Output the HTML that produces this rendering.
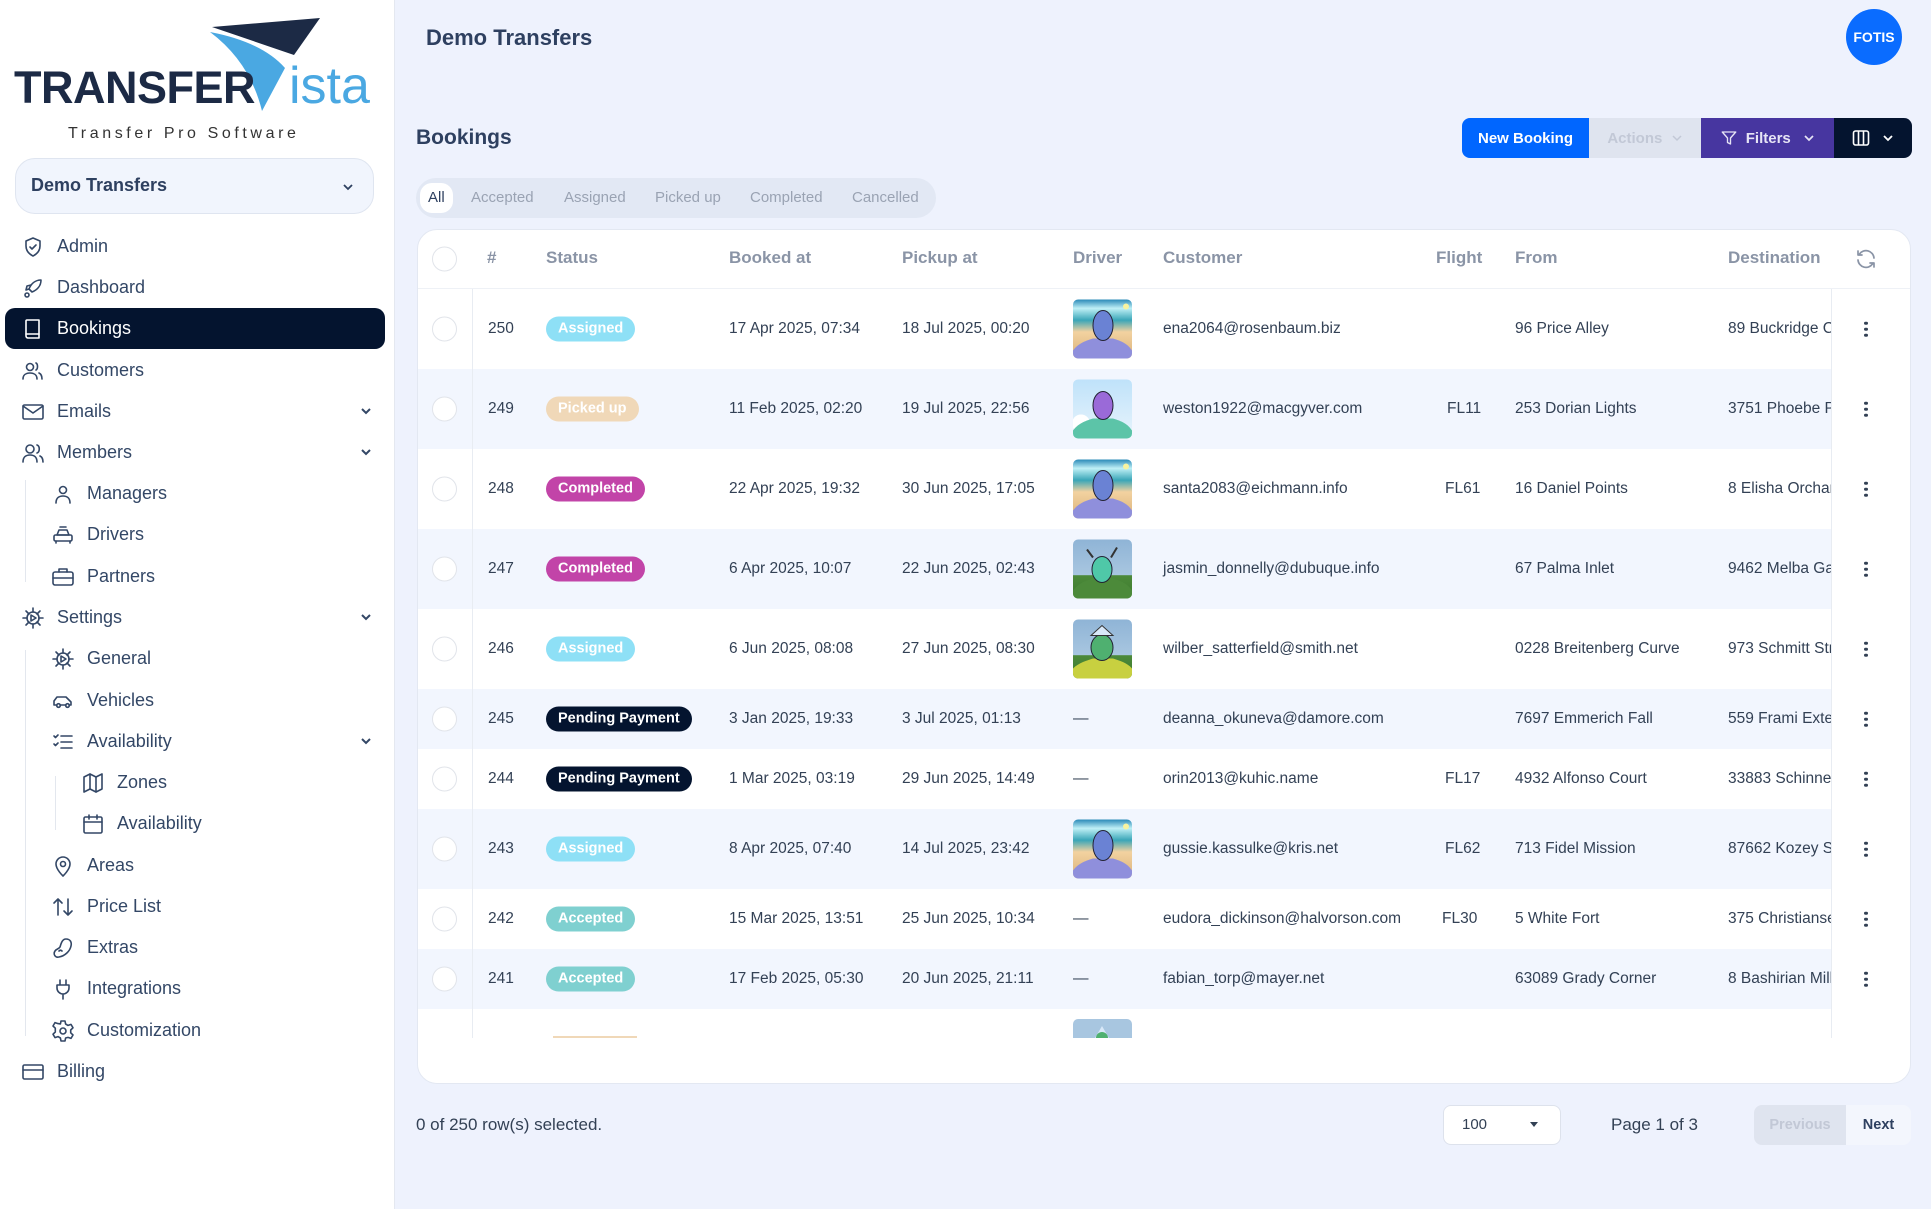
<!DOCTYPE html>
<html><head><meta charset="utf-8">
<style>
*{box-sizing:border-box;margin:0;padding:0}
body{width:1931px;height:1209px;overflow:hidden;background:#eef2fd;font-family:"Liberation Sans",sans-serif;color:#334766;position:relative}
.sb{position:absolute;left:0;top:0;width:395px;height:1209px;background:#fff;border-right:1px solid #e4e8f0}
.abs{position:absolute}
.mi{position:absolute;left:0;height:41px;display:flex;align-items:center;font-size:18px;color:#334766;white-space:nowrap}
.mi svg{width:24px;height:24px;fill:none;stroke:#334766;stroke-width:1.6;stroke-linecap:round;stroke-linejoin:round;margin-right:12px}
.chev{position:absolute;left:358px;width:16px;height:16px}
.vl{position:absolute;width:1px;background:#e3e7ee}
.btn{position:absolute;top:118px;height:40px;display:flex;align-items:center;justify-content:center;font-weight:bold;font-size:15px}
.card{position:absolute;left:417px;top:229px;width:1494px;height:855px;background:#fff;border-radius:20px;border:1px solid #e3e8f2;overflow:hidden}
.th{position:absolute;top:248px;font-weight:bold;font-size:17px;color:#8a94a6}
.row{position:absolute;left:418px;width:1413px}
.row.alt{background:#f2f6fe}
.cell{position:absolute;font-size:15.5px;color:#334155;white-space:nowrap;transform:translateY(-50%)}
.cb{position:absolute;left:432px;width:25px;height:25px;border:1.5px solid #e1e4ea;border-radius:50%;background:#fff;transform:translateY(-50%)}
.bd{position:absolute;left:546px;height:25px;line-height:25px;border-radius:13px;padding:0 12px;color:#fff;font-weight:bold;font-size:14.5px;transform:translateY(-50%);white-space:nowrap}
.av{position:absolute;left:1073px;width:59px;height:59px;border-radius:5px;overflow:hidden;transform:translateY(-50%)}
.dots{position:absolute;left:1864px;width:4px;transform:translateY(-50%)}
.dots i{display:block;width:3.5px;height:3.5px;border-radius:50%;background:#334155;margin:2.5px 0}
</style></head><body>

<div class="sb">
  <svg class="abs" style="left:0;top:0" width="395" height="150" viewBox="0 0 395 150">
    <polygon points="212,27 320,18 294,55" fill="#1c2a45"/>
    <path d="M210,32 Q262,42 285,68 L262,111 Q250,62 210,32Z" fill="#4aa8e2"/>
    <text x="14" y="103" font-family="Liberation Sans" font-weight="bold" font-size="45" fill="#1c2a45" letter-spacing="-0.5">TRANSFER</text>
    <text x="289" y="103" font-family="Liberation Sans" font-size="52" fill="#4aa8e2">ista</text>
    <text x="68" y="138" font-family="Liberation Sans" font-size="16" fill="#333" letter-spacing="3.6">Transfer Pro Software</text>
  </svg>
  <div class="abs" style="left:15px;top:158px;width:359px;height:56px;border-radius:20px;background:#f1f5fd;border:1px solid #dfe5f0"></div>
  <div class="abs" style="left:31px;top:175px;font-size:18px;font-weight:bold;color:#2e4060">Demo Transfers</div>
  <svg class="abs" style="left:341px;top:180px" width="14" height="14" viewBox="0 0 14 14"><path d="M3 5l4 4 4-4" fill="none" stroke="#2e4060" stroke-width="1.8"/></svg>

  <div class="abs" style="left:5px;top:308px;width:380px;height:41px;border-radius:10px;background:#04142f"></div>

  <div class="vl" style="left:25px;top:480px;height:102px"></div>
  <div class="vl" style="left:25px;top:650px;height:386px"></div>
  <div class="vl" style="left:55px;top:776px;height:54px"></div>

  <div class="mi" style="top:226px;left:21px"><svg viewBox="0 0 24 24"><path d="M12 3l7 3v5c0 5-3 8-7 10-4-2-7-5-7-10V6z"/><path d="M9 12l2 2 4-4"/></svg>Admin</div>
  <div class="mi" style="top:267px;left:21px"><svg viewBox="0 0 24 24"><path d="M20 4c-6 0-10 4-12 9l3 3c5-2 9-6 9-12z"/><path d="M8 13l-3 1 1-4 4-1"/><circle cx="6" cy="19" r="2"/></svg>Dashboard</div>
  <div class="mi" style="top:308px;left:21px;color:#fff"><svg viewBox="0 0 24 24" style="stroke:#fff"><path d="M6 3h12v18H7a2 2 0 0 1-2-2V4a1 1 0 0 1 1-1z"/><path d="M5 17h13"/></svg>Bookings</div>
  <div class="mi" style="top:350px;left:21px"><svg viewBox="0 0 24 24"><circle cx="9" cy="8" r="3.5"/><path d="M2 20c0-4 3-6 7-6s7 2 7 6"/><path d="M15 4c2 1 2 6 0 7M18 14c2 1 3 3 3 6"/></svg>Customers</div>
  <div class="mi" style="top:391px;left:21px"><svg viewBox="0 0 24 24"><rect x="2" y="5" width="20" height="14" rx="1.5"/><path d="M2 6l10 7 10-7"/></svg>Emails</div>
  <div class="mi" style="top:432px;left:21px"><svg viewBox="0 0 24 24"><circle cx="9" cy="8" r="4"/><path d="M2 21c0-5 3-7 7-7s7 2 7 7"/><path d="M16 4c3 1 3 7 0 8M19 15c2 1 3 3 3 6"/></svg>Members</div>
  <div class="mi" style="top:473px;left:51px"><svg viewBox="0 0 24 24"><circle cx="12" cy="8" r="3.5"/><path d="M5 21c0-5 3-7 7-7s7 2 7 7"/></svg>Managers</div>
  <div class="mi" style="top:514px;left:51px"><svg viewBox="0 0 24 24"><path d="M9 4h6M8 7h8l2 5H6z"/><rect x="3" y="12" width="18" height="6" rx="1.5"/><path d="M5 18v2M19 18v2"/></svg>Drivers</div>
  <div class="mi" style="top:556px;left:51px"><svg viewBox="0 0 24 24"><rect x="2" y="7" width="20" height="13" rx="2"/><path d="M8 7V4h8v3M2 13h20"/></svg>Partners</div>
  <div class="mi" style="top:597px;left:21px"><svg viewBox="0 0 24 24"><circle cx="12" cy="12" r="6"/><path d="M12 2v4M12 18v4M2 12h4M18 12h4M5 5l3 3M16 16l3 3M5 19l3-3M16 8l3-3"/><path d="M10 9l5 3-5 3z"/></svg>Settings</div>
  <div class="mi" style="top:638px;left:51px"><svg viewBox="0 0 24 24"><circle cx="12" cy="12" r="6"/><path d="M12 2v4M12 18v4M2 12h4M18 12h4M5 5l3 3M16 16l3 3M5 19l3-3M16 8l3-3"/><path d="M10 9l5 3-5 3z"/></svg>General</div>
  <div class="mi" style="top:680px;left:51px"><svg viewBox="0 0 24 24"><path d="M3 16v-4l3-4h9l5 5v3h-2M6 16H4M9 16h6"/><circle cx="7.5" cy="16.5" r="1.8"/><circle cx="16.5" cy="16.5" r="1.8"/></svg>Vehicles</div>
  <div class="mi" style="top:721px;left:51px"><svg viewBox="0 0 24 24"><path d="M3 6l1.5 1.5L7 5M3 14l1.5 1.5L7 13M10 6h11M10 12h11M10 18h11"/></svg>Availability</div>
  <div class="mi" style="top:762px;left:81px"><svg viewBox="0 0 24 24"><path d="M3 6l6-3 6 3 6-3v15l-6 3-6-3-6 3z"/><path d="M9 3v15M15 6v15"/></svg>Zones</div>
  <div class="mi" style="top:803px;left:81px"><svg viewBox="0 0 24 24"><rect x="3" y="5" width="18" height="16" rx="1.5"/><path d="M3 10h18M8 3v4M16 3v4"/></svg>Availability</div>
  <div class="mi" style="top:845px;left:51px"><svg viewBox="0 0 24 24"><path d="M12 22s7-6.5 7-12a7 7 0 0 0-14 0c0 5.5 7 12 7 12z"/><circle cx="12" cy="10" r="2.5"/></svg>Areas</div>
  <div class="mi" style="top:886px;left:51px"><svg viewBox="0 0 24 24"><path d="M7 20V4M3 8l4-4 4 4M17 4v16M13 16l4 4 4-4"/></svg>Price List</div>
  <div class="mi" style="top:927px;left:51px"><svg viewBox="0 0 24 24"><path d="M15 3c4 0 6 3 5 7-1 5-6 10-12 11-4 1-6-3-4-6 1-2 4-2 5-4 1-3 2-8 6-8z"/><path d="M8 15c1-1 2-1 3 0"/></svg>Extras</div>
  <div class="mi" style="top:968px;left:51px"><svg viewBox="0 0 24 24"><path d="M9 3v5M15 3v5M6 8h12v3a6 6 0 0 1-12 0zM12 17v5"/></svg>Integrations</div>
  <div class="mi" style="top:1010px;left:51px"><svg viewBox="0 0 24 24"><path d="M10 2h4l.6 3 2.4 1.4 3-1 2 3.4-2.3 2.2v2.8l2.3 2.2-2 3.4-3-1L14.6 19 14 22h-4l-.6-3-2.4-1.4-3 1-2-3.4 2.3-2.2V9.2L2 7l2-3.4 3 1L9.4 5z"/><circle cx="12" cy="12" r="3"/></svg>Customization</div>
  <div class="mi" style="top:1051px;left:21px"><svg viewBox="0 0 24 24"><rect x="2" y="5" width="20" height="14" rx="1.5"/><path d="M2 10h20"/></svg>Billing</div>

  <svg class="chev" style="top:403px" viewBox="0 0 16 16"><path d="M4 6l4 4 4-4" fill="none" stroke="#334766" stroke-width="2"/></svg>
  <svg class="chev" style="top:444px" viewBox="0 0 16 16"><path d="M4 6l4 4 4-4" fill="none" stroke="#334766" stroke-width="2"/></svg>
  <svg class="chev" style="top:609px" viewBox="0 0 16 16"><path d="M4 6l4 4 4-4" fill="none" stroke="#334766" stroke-width="2"/></svg>
  <svg class="chev" style="top:733px" viewBox="0 0 16 16"><path d="M4 6l4 4 4-4" fill="none" stroke="#334766" stroke-width="2"/></svg>
</div>

<div class="abs" style="left:426px;top:25px;font-size:22px;font-weight:bold;color:#2e4060">Demo Transfers</div>
<div class="abs" style="left:1846px;top:9px;width:56px;height:56px;border-radius:50%;background:#0a6cff;color:#fff;font-weight:bold;font-size:14px;display:flex;align-items:center;justify-content:center">FOTIS</div>
<div class="abs" style="left:416px;top:126px;font-size:21px;font-weight:bold;color:#2e4060">Bookings</div>

<div class="btn" style="left:1462px;width:127px;background:#0066ff;color:#fff;border-radius:8px 0 0 8px">New Booking</div>
<div class="btn" style="left:1589px;width:112px;background:#dfe4ef;color:#c2c8d6">Actions&nbsp;&nbsp;<svg width="12" height="12" viewBox="0 0 12 12"><path d="M2 4l4 4 4-4" fill="none" stroke="#c2c8d6" stroke-width="1.5"/></svg></div>
<div class="btn" style="left:1701px;width:133px;background:#4736a0;color:#e6e4f5"><svg width="18" height="18" viewBox="0 0 24 24" style="margin-right:8px"><path d="M3 4h18l-7 8v8l-4-2v-6z" fill="none" stroke="#e6e4f5" stroke-width="1.8" stroke-linejoin="round"/></svg>Filters&nbsp;&nbsp;&nbsp;<svg width="12" height="12" viewBox="0 0 12 12"><path d="M2 4l4 4 4-4" fill="none" stroke="#e6e4f5" stroke-width="1.7"/></svg></div>
<div class="btn" style="left:1834px;width:78px;background:#04142f;border-radius:0 8px 8px 0"><svg width="18" height="18" viewBox="0 0 18 18" style="margin-right:12px"><rect x="1.5" y="2" width="15" height="14" rx="2" fill="none" stroke="#fff" stroke-width="1.6"/><path d="M6.5 2v14M11.5 2v14" stroke="#fff" stroke-width="1.6"/></svg><svg width="12" height="12" viewBox="0 0 12 12"><path d="M2 4l4 4 4-4" fill="none" stroke="#fff" stroke-width="1.8"/></svg></div>

<div class="abs" style="left:416px;top:178px;width:520px;height:40px;border-radius:20px;background:#e2e8f4"></div>
<div class="abs" style="left:420px;top:183px;width:33px;height:30px;border-radius:12px;background:#fff"></div>
<div class="abs" style="top:189px;left:428px;font-size:15px;color:#2e4060">All</div>
<div class="abs" style="top:189px;left:471px;font-size:15px;color:#9aa3b3">Accepted</div>
<div class="abs" style="top:189px;left:564px;font-size:15px;color:#9aa3b3">Assigned</div>
<div class="abs" style="top:189px;left:655px;font-size:15px;color:#9aa3b3">Picked up</div>
<div class="abs" style="top:189px;left:750px;font-size:15px;color:#9aa3b3">Completed</div>
<div class="abs" style="top:189px;left:852px;font-size:15px;color:#9aa3b3">Cancelled</div>

<div class="card"></div>
<div class="cb" style="top:259px"></div>
<div class="th" style="left:487px">#</div>
<div class="th" style="left:546px">Status</div>
<div class="th" style="left:729px">Booked at</div>
<div class="th" style="left:902px">Pickup at</div>
<div class="th" style="left:1073px">Driver</div>
<div class="th" style="left:1163px">Customer</div>
<div class="th" style="left:1436px">Flight</div>
<div class="th" style="left:1515px">From</div>
<div class="th" style="left:1728px">Destination</div>
<svg class="abs" style="left:1854px;top:247px" width="24" height="24" viewBox="0 0 24 24"><path d="M20 11a8 8 0 0 0-14.5-4M4 4v4h4M4 13a8 8 0 0 0 14.5 4M20 20v-4h-4" fill="none" stroke="#8a94a6" stroke-width="1.7" stroke-linecap="round" stroke-linejoin="round"/></svg>
<div class="abs" style="left:418px;top:288px;width:1492px;height:1px;background:#eef1f6"></div>

<div class="row" style="top:289px;height:80px"></div>
<div class="row alt" style="top:369px;height:80px"></div>
<div class="row" style="top:449px;height:80px"></div>
<div class="row alt" style="top:529px;height:80px"></div>
<div class="row" style="top:609px;height:80px"></div>
<div class="row alt" style="top:689px;height:60px"></div>
<div class="row" style="top:749px;height:60px"></div>
<div class="row alt" style="top:809px;height:80px"></div>
<div class="row" style="top:889px;height:60px"></div>
<div class="row alt" style="top:949px;height:60px"></div>
<div class="abs" style="left:472px;top:289px;width:1px;height:749px;background:#e8ecf2"></div>
<div class="abs" style="left:1831px;top:289px;width:1px;height:749px;background:#e8ecf2"></div>

<svg width="0" height="0" style="position:absolute"><defs>
<linearGradient id="sky" x1="0" y1="0" x2="0" y2="1"><stop offset="0" stop-color="#2a8ab8"/><stop offset=".15" stop-color="#bff0f6"/><stop offset=".35" stop-color="#3aa6b8"/><stop offset=".55" stop-color="#f3d2a0"/><stop offset="1" stop-color="#d9b27a"/></linearGradient>
<linearGradient id="sky2" x1="0" y1="0" x2="0" y2="1"><stop offset="0" stop-color="#bfe2fa"/><stop offset="1" stop-color="#e8f4fc"/></linearGradient>
<linearGradient id="sky3" x1="0" y1="0" x2="0" y2="1"><stop offset="0" stop-color="#8fb4d6"/><stop offset=".6" stop-color="#a8c6e0"/><stop offset=".61" stop-color="#4c8a3a"/><stop offset="1" stop-color="#3d7a2e"/></linearGradient>
</defs></svg>

<div class="cb" style="top:329px"></div><div class="cell" style="left:488px;top:329px">250</div><div class="bd" style="top:329px;background:#8ee0f6">Assigned</div><div class="cell" style="left:729px;top:329px">17 Apr 2025, 07:34</div><div class="cell" style="left:902px;top:329px">18 Jul 2025, 00:20</div>
<div class="av" style="top:329px"><svg width="59" height="59" viewBox="0 0 59 59"><rect width="59" height="59" fill="url(#sky)"/><circle cx="53" cy="7" r="3" fill="#f8f3a0"/><path d="M0 59v-8c6-8 14-10 20-12h20c6 2 14 4 19 12v8z" fill="#8f8fdc"/><ellipse cx="30" cy="26" rx="10" ry="15" fill="#6a82d4" stroke="#223" stroke-width="1"/></svg></div>
<div class="cell" style="left:1163px;top:329px">ena2064@rosenbaum.biz</div><div class="cell" style="left:1515px;top:329px">96 Price Alley</div><div class="cell" style="left:1728px;top:329px;width:103px;overflow:hidden">89 Buckridge Crossing</div>
<div class="dots" style="top:329px"><i></i><i></i><i></i></div>

<div class="cb" style="top:409px"></div><div class="cell" style="left:488px;top:409px">249</div><div class="bd" style="top:409px;background:#f0d8b8">Picked up</div><div class="cell" style="left:729px;top:409px">11 Feb 2025, 02:20</div><div class="cell" style="left:902px;top:409px">19 Jul 2025, 22:56</div>
<div class="av" style="top:409px"><svg width="59" height="59" viewBox="0 0 59 59"><rect width="59" height="59" fill="url(#sky2)"/><circle cx="8" cy="44" r="9" fill="#fff"/><path d="M0 59v-8c6-8 14-10 20-12h20c6 2 14 4 19 12v8z" fill="#5cc4a8"/><ellipse cx="30" cy="26" rx="10" ry="14" fill="#9a6ad8" stroke="#223" stroke-width="1"/></svg></div>
<div class="cell" style="left:1163px;top:409px">weston1922@macgyver.com</div><div class="cell" style="left:1447px;top:409px">FL11</div><div class="cell" style="left:1515px;top:409px">253 Dorian Lights</div><div class="cell" style="left:1728px;top:409px;width:103px;overflow:hidden">3751 Phoebe Pass</div>
<div class="dots" style="top:409px"><i></i><i></i><i></i></div>

<div class="cb" style="top:489px"></div><div class="cell" style="left:488px;top:489px">248</div><div class="bd" style="top:489px;background:#c244a8">Completed</div><div class="cell" style="left:729px;top:489px">22 Apr 2025, 19:32</div><div class="cell" style="left:902px;top:489px">30 Jun 2025, 17:05</div>
<div class="av" style="top:489px"><svg width="59" height="59" viewBox="0 0 59 59"><rect width="59" height="59" fill="url(#sky)"/><circle cx="53" cy="7" r="3" fill="#f8f3a0"/><path d="M0 59v-8c6-8 14-10 20-12h20c6 2 14 4 19 12v8z" fill="#8f8fdc"/><ellipse cx="30" cy="26" rx="10" ry="15" fill="#6a82d4" stroke="#223" stroke-width="1"/></svg></div>
<div class="cell" style="left:1163px;top:489px">santa2083@eichmann.info</div><div class="cell" style="left:1445px;top:489px">FL61</div><div class="cell" style="left:1515px;top:489px">16 Daniel Points</div><div class="cell" style="left:1728px;top:489px;width:103px;overflow:hidden">8 Elisha Orchard</div>
<div class="dots" style="top:489px"><i></i><i></i><i></i></div>

<div class="cb" style="top:569px"></div><div class="cell" style="left:488px;top:569px">247</div><div class="bd" style="top:569px;background:#c244a8">Completed</div><div class="cell" style="left:729px;top:569px">6 Apr 2025, 10:07</div><div class="cell" style="left:902px;top:569px">22 Jun 2025, 02:43</div>
<div class="av" style="top:569px"><svg width="59" height="59" viewBox="0 0 59 59"><rect width="59" height="59" fill="url(#sky3)"/><path d="M0 59v-8c6-8 14-10 20-12h20c6 2 14 4 19 12v8z" fill="#4c8a3a"/><ellipse cx="29" cy="30" rx="10" ry="13" fill="#4fc8a8" stroke="#223" stroke-width="1"/><path d="M20 18l-6-8M38 18l6-10" stroke="#333" stroke-width="2"/></svg></div>
<div class="cell" style="left:1163px;top:569px">jasmin_donnelly@dubuque.info</div><div class="cell" style="left:1515px;top:569px">67 Palma Inlet</div><div class="cell" style="left:1728px;top:569px;width:103px;overflow:hidden">9462 Melba Gateway</div>
<div class="dots" style="top:569px"><i></i><i></i><i></i></div>

<div class="cb" style="top:649px"></div><div class="cell" style="left:488px;top:649px">246</div><div class="bd" style="top:649px;background:#8ee0f6">Assigned</div><div class="cell" style="left:729px;top:649px">6 Jun 2025, 08:08</div><div class="cell" style="left:902px;top:649px">27 Jun 2025, 08:30</div>
<div class="av" style="top:649px"><svg width="59" height="59" viewBox="0 0 59 59"><rect width="59" height="59" fill="url(#sky3)"/><path d="M0 59v-10c6-6 14-8 20-10h20c6 2 14 4 19 10v10z" fill="#c8d040"/><ellipse cx="29" cy="28" rx="11" ry="13" fill="#4fb070" stroke="#223" stroke-width="1"/><path d="M18 16l11-10 11 10z" fill="#d8e8f8" stroke="#333"/></svg></div>
<div class="cell" style="left:1163px;top:649px">wilber_satterfield@smith.net</div><div class="cell" style="left:1515px;top:649px">0228 Breitenberg Curve</div><div class="cell" style="left:1728px;top:649px;width:103px;overflow:hidden">973 Schmitt Street</div>
<div class="dots" style="top:649px"><i></i><i></i><i></i></div>

<div class="cb" style="top:719px"></div><div class="cell" style="left:488px;top:719px">245</div><div class="bd" style="top:719px;background:#04142f">Pending Payment</div><div class="cell" style="left:729px;top:719px">3 Jan 2025, 19:33</div><div class="cell" style="left:902px;top:719px">3 Jul 2025, 01:13</div><div class="cell" style="left:1073px;top:719px">—</div>
<div class="cell" style="left:1163px;top:719px">deanna_okuneva@damore.com</div><div class="cell" style="left:1515px;top:719px">7697 Emmerich Fall</div><div class="cell" style="left:1728px;top:719px;width:103px;overflow:hidden">559 Frami Extension</div>
<div class="dots" style="top:719px"><i></i><i></i><i></i></div>

<div class="cb" style="top:779px"></div><div class="cell" style="left:488px;top:779px">244</div><div class="bd" style="top:779px;background:#04142f">Pending Payment</div><div class="cell" style="left:729px;top:779px">1 Mar 2025, 03:19</div><div class="cell" style="left:902px;top:779px">29 Jun 2025, 14:49</div><div class="cell" style="left:1073px;top:779px">—</div>
<div class="cell" style="left:1163px;top:779px">orin2013@kuhic.name</div><div class="cell" style="left:1445px;top:779px">FL17</div><div class="cell" style="left:1515px;top:779px">4932 Alfonso Court</div><div class="cell" style="left:1728px;top:779px;width:103px;overflow:hidden">33883 Schinner Ways</div>
<div class="dots" style="top:779px"><i></i><i></i><i></i></div>

<div class="cb" style="top:849px"></div><div class="cell" style="left:488px;top:849px">243</div><div class="bd" style="top:849px;background:#8ee0f6">Assigned</div><div class="cell" style="left:729px;top:849px">8 Apr 2025, 07:40</div><div class="cell" style="left:902px;top:849px">14 Jul 2025, 23:42</div>
<div class="av" style="top:849px"><svg width="59" height="59" viewBox="0 0 59 59"><rect width="59" height="59" fill="url(#sky)"/><circle cx="53" cy="7" r="3" fill="#f8f3a0"/><path d="M0 59v-8c6-8 14-10 20-12h20c6 2 14 4 19 12v8z" fill="#8f8fdc"/><ellipse cx="30" cy="26" rx="10" ry="15" fill="#6a82d4" stroke="#223" stroke-width="1"/></svg></div>
<div class="cell" style="left:1163px;top:849px">gussie.kassulke@kris.net</div><div class="cell" style="left:1445px;top:849px">FL62</div><div class="cell" style="left:1515px;top:849px">713 Fidel Mission</div><div class="cell" style="left:1728px;top:849px;width:103px;overflow:hidden">87662 Kozey Shoals</div>
<div class="dots" style="top:849px"><i></i><i></i><i></i></div>

<div class="cb" style="top:919px"></div><div class="cell" style="left:488px;top:919px">242</div><div class="bd" style="top:919px;background:#7fd0d0">Accepted</div><div class="cell" style="left:729px;top:919px">15 Mar 2025, 13:51</div><div class="cell" style="left:902px;top:919px">25 Jun 2025, 10:34</div><div class="cell" style="left:1073px;top:919px">—</div>
<div class="cell" style="left:1163px;top:919px">eudora_dickinson@halvorson.com</div><div class="cell" style="left:1442px;top:919px">FL30</div><div class="cell" style="left:1515px;top:919px">5 White Fort</div><div class="cell" style="left:1728px;top:919px;width:103px;overflow:hidden">375 Christiansen Ford</div>
<div class="dots" style="top:919px"><i></i><i></i><i></i></div>

<div class="cb" style="top:979px"></div><div class="cell" style="left:488px;top:979px">241</div><div class="bd" style="top:979px;background:#7fd0d0">Accepted</div><div class="cell" style="left:729px;top:979px">17 Feb 2025, 05:30</div><div class="cell" style="left:902px;top:979px">20 Jun 2025, 21:11</div><div class="cell" style="left:1073px;top:979px">—</div>
<div class="cell" style="left:1163px;top:979px">fabian_torp@mayer.net</div><div class="cell" style="left:1515px;top:979px">63089 Grady Corner</div><div class="cell" style="left:1728px;top:979px;width:103px;overflow:hidden">8 Bashirian Mill</div>
<div class="dots" style="top:979px"><i></i><i></i><i></i></div>

<div class="abs" style="left:1073px;top:1019px;width:59px;height:19px;border-radius:5px 5px 0 0;background:#a8c6e0;overflow:hidden"><svg width="59" height="19"><path d="M22 19l7-12 7 12z" fill="#d8e8f8"/><circle cx="29" cy="19" r="6" fill="#4fb070"/></svg></div>
<div class="abs" style="left:553px;top:1036px;width:84px;height:2px;background:#f0d8b8"></div>
<div class="abs" style="left:418px;top:1038px;width:1492px;height:45px;background:#fff;border-radius:0 0 20px 20px"></div>

<div class="abs" style="left:416px;top:1115px;font-size:17px;color:#334155">0 of 250 row(s) selected.</div>
<div class="abs" style="left:1443px;top:1105px;width:118px;height:40px;background:#fff;border:1px solid #dde2ec;border-radius:8px"></div>
<div class="abs" style="left:1462px;top:1116px;font-size:15px;color:#334155">100</div>
<svg class="abs" style="left:1529px;top:1121px" width="10" height="8" viewBox="0 0 10 8"><path d="M1 1h8L5 6z" fill="#334155"/></svg>
<div class="abs" style="left:1611px;top:1115px;font-size:17px;color:#334155">Page 1 of 3</div>
<div class="abs" style="left:1754px;top:1105px;width:92px;height:40px;background:#dfe4ef;border-radius:8px 0 0 8px;color:#c2c8d6;font-weight:bold;font-size:14.5px;display:flex;align-items:center;justify-content:center">Previous</div>
<div class="abs" style="left:1846px;top:1105px;width:65px;height:40px;background:#f3f6fd;border-radius:0 8px 8px 0;color:#2e4060;font-weight:bold;font-size:14.5px;display:flex;align-items:center;justify-content:center">Next</div>
</body></html>
